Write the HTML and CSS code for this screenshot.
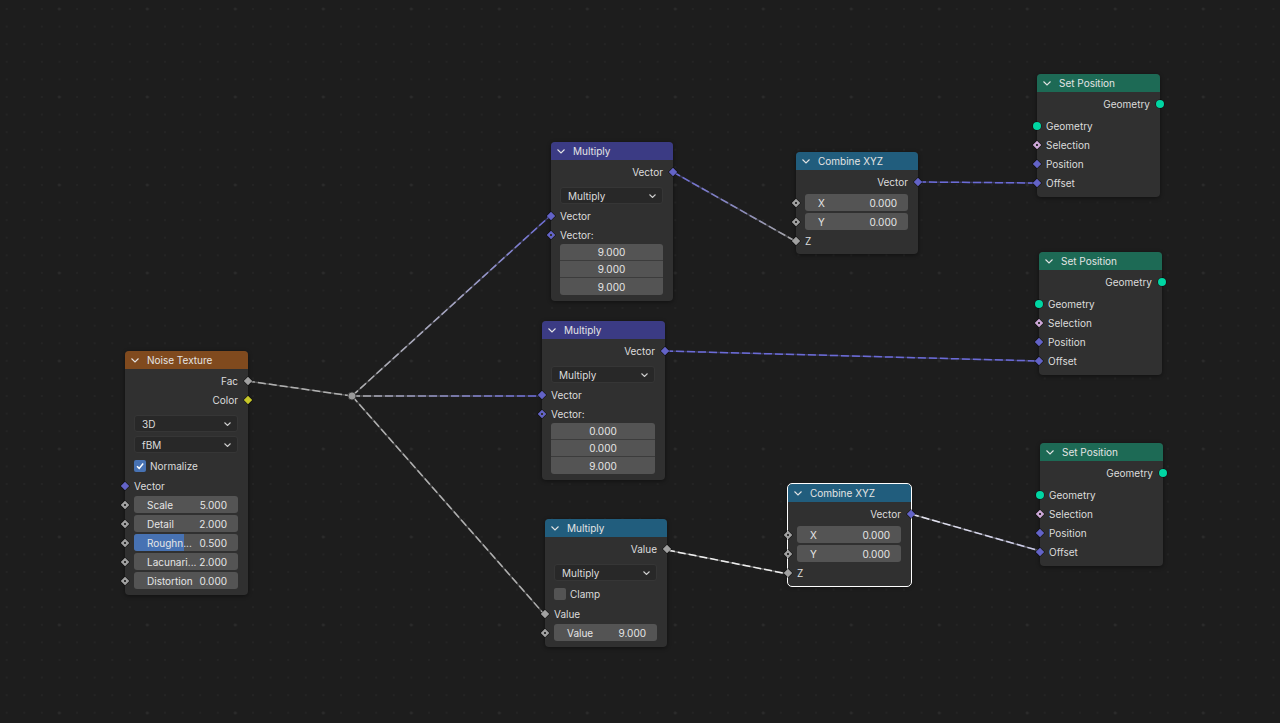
FILE: index.html
```html
<!DOCTYPE html>
<html>
<head>
<meta charset="utf-8">
<link rel="stylesheet" href="styles.css">
</head>
<body>
<div class="canvas">
  <svg class="links" width="1280" height="723" viewBox="0 0 1280 723">
    <defs>
      <linearGradient id="g2" gradientUnits="userSpaceOnUse" x1="352" y1="396" x2="550" y2="216"><stop offset="0" stop-color="#b0b0b0"/><stop offset="0.55" stop-color="#a4a4c4"/><stop offset="1" stop-color="#6b6bd6"/></linearGradient>
      <linearGradient id="g3" gradientUnits="userSpaceOnUse" x1="352" y1="396" x2="542" y2="396"><stop offset="0" stop-color="#b0b0b0"/><stop offset="1" stop-color="#6b6bd6"/></linearGradient>
      <linearGradient id="g5" gradientUnits="userSpaceOnUse" x1="673" y1="172" x2="795" y2="241"><stop offset="0" stop-color="#6b6bd6"/><stop offset="1" stop-color="#a8a8a8"/></linearGradient>
      <linearGradient id="g9" gradientUnits="userSpaceOnUse" x1="911" y1="514" x2="1040" y2="551"><stop offset="0" stop-color="#e6e6f0"/><stop offset="1" stop-color="#c8c8e6"/></linearGradient>
    </defs>
    <g class="base">
      <line x1="247" y1="381" x2="352" y2="396" stroke="#b0b0b0"/>
      <line x1="352" y1="396" x2="550" y2="216" stroke="url(#g2)"/>
      <line x1="352" y1="396" x2="542" y2="396" stroke="url(#g3)"/>
      <line x1="352" y1="396" x2="544" y2="614" stroke="#b0b0b0"/>
      <line x1="673" y1="172" x2="795" y2="241" stroke="url(#g5)"/>
      <line x1="918" y1="182" x2="1037" y2="183" stroke="#6b6bd6"/>
      <line x1="665" y1="351" x2="1039" y2="361" stroke="#6b6bd6"/>
      <line x1="667" y1="550" x2="788" y2="574" stroke="#eeeeee"/>
      <line x1="911" y1="514" x2="1040" y2="551" stroke="url(#g9)"/>
    </g>
    <g class="dash">
      <line x1="247" y1="381" x2="352" y2="396" stroke="#b0b0b0"/>
      <line x1="352" y1="396" x2="550" y2="216" stroke="url(#g2)"/>
      <line x1="352" y1="396" x2="542" y2="396" stroke="url(#g3)"/>
      <line x1="352" y1="396" x2="544" y2="614" stroke="#b0b0b0"/>
      <line x1="673" y1="172" x2="795" y2="241" stroke="url(#g5)"/>
      <line x1="918" y1="182" x2="1037" y2="183" stroke="#6b6bd6"/>
      <line x1="665" y1="351" x2="1039" y2="361" stroke="#6b6bd6"/>
      <line x1="667" y1="550" x2="788" y2="574" stroke="#eeeeee"/>
      <line x1="911" y1="514" x2="1040" y2="551" stroke="url(#g9)"/>
    </g>
    <circle cx="352" cy="396" r="4" fill="#9a9a9a" stroke="#2a2a2a" stroke-width="0.8"/>
  </svg>

  <!-- Noise Texture -->
  <div class="node noise">
    <div class="hdr"><svg class="chev" viewBox="0 0 8 5"><polyline points="0.5,0.5 4,4 7.5,0.5"/></svg>Noise Texture</div>
    <div class="body">
      <div class="row out">Fac<span class="sock r dia grey"></span></div>
      <div class="row out">Color<span class="sock r dia yellow"></span></div>
      <div class="drow first"><div class="dd"><span>3D</span><svg class="ddarr" viewBox="0 0 7 4"><polyline points="0.5,0.5 3.5,3.5 6.5,0.5"/></svg></div></div>
      <div class="drow"><div class="dd"><span>fBM</span><svg class="ddarr" viewBox="0 0 7 4"><polyline points="0.5,0.5 3.5,3.5 6.5,0.5"/></svg></div></div>
      <div class="crow"><span class="cb on"><svg viewBox="0 0 10 10"><polyline points="2,5.2 4.2,7.4 8.2,2.6"/></svg></span>Normalize</div>
      <div class="row">Vector<span class="sock l dia vec"></span></div>
      <div class="frow"><span class="sock l ddot grey"></span><div class="field"><span>Scale</span><span>5.000</span></div></div>
      <div class="frow"><span class="sock l ddot grey"></span><div class="field"><span>Detail</span><span>2.000</span></div></div>
      <div class="frow"><span class="sock l ddot grey"></span><div class="field"><span class="fill" style="width:48%"></span><span>Roughn...</span><span>0.500</span></div></div>
      <div class="frow"><span class="sock l ddot grey"></span><div class="field"><span>Lacunari...</span><span>2.000</span></div></div>
      <div class="frow"><span class="sock l ddot grey"></span><div class="field"><span>Distortion</span><span>0.000</span></div></div>
    </div>
  </div>

  <!-- Multiply 1 -->
  <div class="node vmath m1">
    <div class="hdr"><svg class="chev" viewBox="0 0 8 5"><polyline points="0.5,0.5 4,4 7.5,0.5"/></svg>Multiply</div>
    <div class="body">
      <div class="row out">Vector<span class="sock r dia vec"></span></div>
      <div class="drow first"><div class="dd"><span>Multiply</span><svg class="ddarr" viewBox="0 0 7 4"><polyline points="0.5,0.5 3.5,3.5 6.5,0.5"/></svg></div></div>
      <div class="row">Vector<span class="sock l dia vec"></span></div>
      <div class="row">Vector:<span class="sock l ddot vec"></span></div>
      <div class="vstack"><div class="vf">9.000</div><div class="vf">9.000</div><div class="vf">9.000</div></div>
    </div>
  </div>

  <!-- Multiply 2 -->
  <div class="node vmath m2">
    <div class="hdr"><svg class="chev" viewBox="0 0 8 5"><polyline points="0.5,0.5 4,4 7.5,0.5"/></svg>Multiply</div>
    <div class="body">
      <div class="row out">Vector<span class="sock r dia vec"></span></div>
      <div class="drow first"><div class="dd"><span>Multiply</span><svg class="ddarr" viewBox="0 0 7 4"><polyline points="0.5,0.5 3.5,3.5 6.5,0.5"/></svg></div></div>
      <div class="row">Vector<span class="sock l dia vec"></span></div>
      <div class="row">Vector:<span class="sock l ddot vec"></span></div>
      <div class="vstack"><div class="vf">0.000</div><div class="vf">0.000</div><div class="vf">9.000</div></div>
    </div>
  </div>

  <!-- Multiply 3 (math) -->
  <div class="node conv m3">
    <div class="hdr"><svg class="chev" viewBox="0 0 8 5"><polyline points="0.5,0.5 4,4 7.5,0.5"/></svg>Multiply</div>
    <div class="body">
      <div class="row out">Value<span class="sock r dia grey"></span></div>
      <div class="drow first"><div class="dd"><span>Multiply</span><svg class="ddarr" viewBox="0 0 7 4"><polyline points="0.5,0.5 3.5,3.5 6.5,0.5"/></svg></div></div>
      <div class="crow"><span class="cb"></span>Clamp</div>
      <div class="row">Value<span class="sock l dia grey"></span></div>
      <div class="frow"><span class="sock l ddot grey"></span><div class="field"><span>Value</span><span>9.000</span></div></div>
    </div>
  </div>

  <!-- Combine XYZ 1 -->
  <div class="node conv c1">
    <div class="hdr"><svg class="chev" viewBox="0 0 8 5"><polyline points="0.5,0.5 4,4 7.5,0.5"/></svg>Combine XYZ</div>
    <div class="body">
      <div class="row out">Vector<span class="sock r dia vec"></span></div>
      <div class="frow gap"><span class="sock l ddot grey"></span><div class="field"><span>X</span><span>0.000</span></div></div>
      <div class="frow"><span class="sock l ddot grey"></span><div class="field"><span>Y</span><span>0.000</span></div></div>
      <div class="row">Z<span class="sock l dia grey"></span></div>
    </div>
  </div>

  <!-- Combine XYZ 2 (selected) -->
  <div class="node conv c2 sel">
    <div class="hdr"><svg class="chev" viewBox="0 0 8 5"><polyline points="0.5,0.5 4,4 7.5,0.5"/></svg>Combine XYZ</div>
    <div class="body">
      <div class="row out">Vector<span class="sock r dia vec"></span></div>
      <div class="frow gap"><span class="sock l ddot grey"></span><div class="field"><span>X</span><span>0.000</span></div></div>
      <div class="frow"><span class="sock l ddot grey"></span><div class="field"><span>Y</span><span>0.000</span></div></div>
      <div class="row">Z<span class="sock l dia grey"></span></div>
    </div>
  </div>

  <!-- Set Position x3 -->
  <div class="node geo s1">
    <div class="hdr"><svg class="chev" viewBox="0 0 8 5"><polyline points="0.5,0.5 4,4 7.5,0.5"/></svg>Set Position</div>
    <div class="body">
      <div class="row out">Geometry<span class="sock r circ"></span></div>
      <div class="row gap">Geometry<span class="sock l circ"></span></div>
      <div class="row">Selection<span class="sock l ddot pink"></span></div>
      <div class="row">Position<span class="sock l dia vec"></span></div>
      <div class="row">Offset<span class="sock l dia vec"></span></div>
    </div>
  </div>
  <div class="node geo s2">
    <div class="hdr"><svg class="chev" viewBox="0 0 8 5"><polyline points="0.5,0.5 4,4 7.5,0.5"/></svg>Set Position</div>
    <div class="body">
      <div class="row out">Geometry<span class="sock r circ"></span></div>
      <div class="row gap">Geometry<span class="sock l circ"></span></div>
      <div class="row">Selection<span class="sock l ddot pink"></span></div>
      <div class="row">Position<span class="sock l dia vec"></span></div>
      <div class="row">Offset<span class="sock l dia vec"></span></div>
    </div>
  </div>
  <div class="node geo s3">
    <div class="hdr"><svg class="chev" viewBox="0 0 8 5"><polyline points="0.5,0.5 4,4 7.5,0.5"/></svg>Set Position</div>
    <div class="body">
      <div class="row out">Geometry<span class="sock r circ"></span></div>
      <div class="row gap">Geometry<span class="sock l circ"></span></div>
      <div class="row">Selection<span class="sock l ddot pink"></span></div>
      <div class="row">Position<span class="sock l dia vec"></span></div>
      <div class="row">Offset<span class="sock l dia vec"></span></div>
    </div>
  </div>
</div>
</body>
</html>
```

FILE: styles.css
```css
* { box-sizing: border-box; }
html, body { margin: 0; padding: 0; }
body {
  width: 1280px;
  height: 723px;
  overflow: hidden;
  background: #1d1d1d;
  font-family: Inter, "Noto Sans", "DejaVu Sans", sans-serif;
  font-size: 10px;
  color: #dcdcdc;
}
.canvas {
  position: relative;
  width: 1280px;
  height: 723px;
  background-color: #1d1d1d;
  background-image:
    radial-gradient(circle, #2b2b2b 0, #2b2b2b 1.2px, transparent 1.8px),
    radial-gradient(circle, #242424 0, #242424 0.7px, transparent 1.2px);
  background-size: 88px 88px, 17.6px 17.6px;
  background-position: 15.3px -35px, -2.1px 0.2px;
}
.links { position: absolute; left: 0; top: 0; z-index: 0; }
.links line { fill: none; stroke-width: 1.5; stroke-linecap: butt; }
.links .base line { opacity: 0.35; }
.links .dash line { stroke-dasharray: 8 3; }

.node {
  position: absolute;
  z-index: 1;
  width: 123px;
  background: #303030;
  border-radius: 4px;
  box-shadow: 0 1px 4px rgba(0,0,0,0.45);
}
.node.sel { outline: 1px solid #ffffff; outline-offset: 0; }
.hdr {
  height: 18px;
  border-radius: 4px 4px 0 0;
  display: flex;
  align-items: center;
  padding-left: 6px;
  color: #e4e4e4;
  font-size: 10px;
  white-space: nowrap;
}
.chev { width: 8px; height: 5px; margin-right: 8px; margin-top: 1px; }
.chev polyline { fill: none; stroke: #e4e4e4; stroke-width: 1.1; }
.body { padding: 2px 0 5px; }

.noise .hdr { background: #804a1e; }
.vmath .hdr { background: #3b3b84; }
.conv .hdr { background: #215d7d; }
.geo .hdr { background: #1d6a55; }

.noise { left: 125px; top: 351px; }
.m1 { left: 551px; top: 142px; width: 122px; }
.m2 { left: 542px; top: 321px; }
.m3 { left: 545px; top: 519px; width: 122px; }
.c1 { left: 796px; top: 152px; width: 122px; }
.c2 { left: 788px; top: 484px; }
.s1 { left: 1037px; top: 74px; }
.s2 { left: 1039px; top: 252px; }
.s3 { left: 1040px; top: 443px; }

.row {
  position: relative;
  height: 19px;
  display: flex;
  align-items: center;
  padding: 0 10px 0 9px;
  white-space: nowrap;
}
.row.out { justify-content: flex-end; }
.row.gap { margin-top: 3px; }

.drow {
  height: 21px;
  display: flex;
  align-items: center;
  padding: 0 10px 0 9px;
}
.drow.first { margin-top: 4px; }
.dd {
  flex: 1;
  height: 17px;
  background: #282828;
  border: 1px solid #363636;
  border-radius: 3px;
  display: flex;
  align-items: center;
  justify-content: space-between;
  padding: 0 6px 0 7px;
  color: #dcdcdc;
}
.ddarr { width: 7px; height: 4px; }
.ddarr polyline { fill: none; stroke: #cfcfcf; stroke-width: 1.1; }

.crow {
  height: 21px;
  display: flex;
  align-items: center;
  padding: 0 10px 0 9px;
}
.cb {
  width: 12px;
  height: 12px;
  border-radius: 2px;
  background: #545454;
  margin-right: 4px;
  display: flex;
  align-items: center;
  justify-content: center;
}
.cb.on { background: #4772b3; }
.cb svg { width: 10px; height: 10px; }
.cb polyline { fill: none; stroke: #ffffff; stroke-width: 1.5; }

.frow {
  position: relative;
  height: 19px;
  display: flex;
  align-items: center;
  padding: 0 10px 0 9px;
}
.frow.gap { margin-top: 2px; }
.field {
  position: relative;
  flex: 1;
  height: 17px;
  background: #545454;
  border-radius: 3px;
  display: flex;
  align-items: center;
  justify-content: space-between;
  padding: 0 11px 0 13px;
  overflow: hidden;
  color: #e6e6e6;
  white-space: nowrap;
}
.field span { position: relative; }
.field .fill { position: absolute; left: 0; top: 0; bottom: 0; background: #4772b3; }

.vstack {
  margin: 0 10px 0 9px;
  border-radius: 3px;
  overflow: hidden;
}
.vf {
  height: 17px;
  background: #545454;
  display: flex;
  align-items: center;
  justify-content: center;
  color: #e6e6e6;
  border-bottom: 1px solid #3c3c3c;
}
.vf:last-child { border-bottom: none; }
.m1 .body, .m2 .body { padding-bottom: 6px; }
.c1 .body, .c2 .body { padding-bottom: 4px; }

.sock { position: absolute; top: 50%; }
.sock.l { left: 0; }
.sock.r { right: 0; }
.sock.dia, .sock.ddot {
  width: 6px;
  height: 6px;
  transform: translate(-50%, -50%) rotate(45deg);
  box-shadow: 0 0 0 0.6px rgba(0,0,0,0.6);
}
.sock.r.dia, .sock.r.ddot { transform: translate(50%, -50%) rotate(45deg); }
.sock.dia.grey { background: #a1a1a1; }
.sock.dia.yellow { background: #c7c729; }
.sock.dia.vec { background: #6363c7; }
.sock.ddot.grey { background: radial-gradient(circle, #303030 0, #303030 1px, #a1a1a1 1.5px); }
.sock.ddot.vec { background: radial-gradient(circle, #303030 0, #303030 1px, #6363c7 1.5px); }
.sock.ddot.pink { background: radial-gradient(circle, #303030 0, #303030 1px, #cca6d6 1.5px); }
.sock.circ {
  width: 8px;
  height: 8px;
  border-radius: 50%;
  background: #00d6a3;
  box-shadow: 0 0 0 0.6px rgba(0,0,0,0.6);
  transform: translate(-50%, -50%);
}
.sock.r.circ { transform: translate(50%, -50%); }
```
